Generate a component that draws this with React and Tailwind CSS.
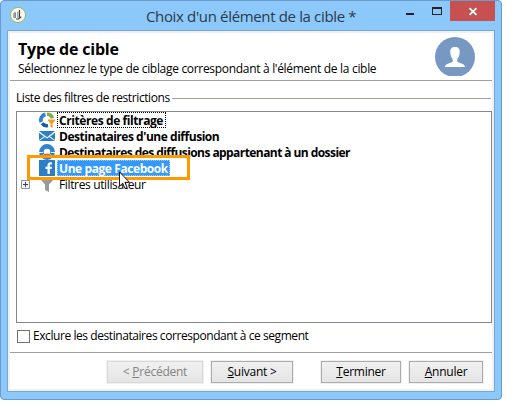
import React from "react";

function AppIcon() {
  return (
    <svg width="18" height="18" viewBox="0 0 18 18">
      <circle cx="9" cy="9" r="7.6" fill="#f8f8f4" stroke="#9cba55" strokeWidth="1" />
      <path d="M4 7.5l2-2 1 1-1 6-2-1zM8 6l1.500-1v7H8z" fill="#aaa" />
      <path d="M10.500 4v7.500M7 13l2.800-.2 2.500-2.200" fill="none" stroke="#444" strokeWidth="1.200" />
      <path d="M6.300 7v5" stroke="#777" strokeWidth="1" />
    </svg>
  );
}

function Avatar() {
  return (
    <svg width="40" height="39" viewBox="0 0 40 39">
      <circle cx="20" cy="20" r="20" fill="#7898c4" />
      <path d="M20 10c-3.400 0-5 2-4.700 5.500.2 3 1 4.800 2.400 6.500v2.400c-.7 1.500-7.700 1.700-7.700 5.600h20c0-3.900-7-4.100-7.700-5.600V22c1.400-1.700 2.200-3.500 2.400-6.500C25 12 23.400 10 20 10z" fill="#fff" />
    </svg>
  );
}

function TargetFilterIcon() {
  return (
    <svg width="16" height="16" viewBox="0 0 16 16">
      <path d="M6.500 2.300A5.800 5.800 0 0 0 2.300 10" fill="none" stroke="#2f83cf" strokeWidth="3.800" />
      <path d="M3.200 11.200A5.800 5.800 0 0 0 9 13.600" fill="none" stroke="#195b9b" strokeWidth="3.400" />
      <path d="M8 2.200A5.800 5.800 0 0 1 13.500 6.300" fill="none" stroke="#7dad41" strokeWidth="3.600" />
      <path d="M9 7.500h7v1.200l-2.500 2.800V16l-2-1v-3.500L9 8.700z" fill="#f39a2b" />
    </svg>
  );
}

function MailIcon() {
  return (
    <svg width="16" height="16" viewBox="0 0 16 16">
      <path d="M0 3h16L8 9.200zM0 4.800L5 8.400 0 12zM16 4.800L11 8.400 16 12zM0 13l6-4 2 1.600L10 9l6 4z" fill="#2a7fca" />
    </svg>
  );
}

function FolderTargetIcon() {
  return (
    <svg width="16" height="16" viewBox="0 0 16 16">
      <circle cx="8" cy="8" r="5.600" fill="none" stroke="#2f83cf" strokeWidth="4.600" />
      <path d="M0 8.500h4M12 8.500h4M2.500 13l3-3M13.500 13l-3-3" stroke="#fff" strokeWidth="1" />
      <path d="M5 10.500h6" stroke="#e05545" strokeWidth="1.500" />
    </svg>
  );
}

function FacebookIcon() {
  return (
    <svg width="16" height="16" viewBox="0 0 16 16">
      <path d="M0 0h16v16H0z" fill="#2a7fc9" />
      <path d="M8.500 14V9H6.500V6.700h2V5.400C8.500 3.300 9.700 2.300 11.500 2.300H13v2.300h-1c-.9 0-1.200.4-1.200 1.100v1H13L12.700 9h-1.900v5z" fill="#fff" />
    </svg>
  );
}

function FunnelIcon() {
  return (
    <svg width="16" height="16" viewBox="0 0 16 16">
      <path d="M2 2h12v2L10 8.500V16l-4-2V8.500L2 4z" fill="#9a9a9a" />
    </svg>
  );
}

function Row({ icon, children }) {
  return (
    <div className="flex h-4 items-center">
      <div className="h-4 w-4 shrink-0">{icon}</div>
      <div className="ml-[2px] flex h-4 items-center">{children}</div>
    </div>
  );
}

function DialogButton({ className, children }) {
  return (
    <div className={`flex h-[22px] items-center justify-center border bg-linear-to-b from-[#f0f0f0] to-[#e5e5e5] shadow-[0_0_0_1px_#f0f0f0] ${className}`}>
      <span className="whitespace-nowrap tracking-[-0.25px]">{children}</span>
    </div>
  );
}

export default function App() {
  return (
    <div className="relative h-[414px] w-[517px] overflow-hidden bg-white font-['Open_Sans','Noto_Sans',sans-serif] text-[12px] leading-4 whitespace-nowrap text-black">
      <div className="flex h-[400px] w-[502px] flex-col rounded-[4px] border border-[#6a9bcb] bg-[#8cc8fa] px-[6px] pb-[7px]">
        <div className="flex h-[29px] shrink-0">
          <div className="ml-[2px] mt-[5px] w-[18px]"><AppIcon /></div>
          <div className="ml-[119px] mt-[5px] w-[212px] text-[15px] leading-5 tracking-[-0.35px] text-[#2b3b49]">Choix d'un élément de la cible *</div>
          <svg className="ml-[47px]" width="37" height="20" viewBox="0 0 37 20">
            <path d="M1 12h8v2H1z" fill="#222" />
            <path d="M27 6h10v8H27zM28 8v5h8V8z" fill="#222" fillRule="evenodd" />
          </svg>
          <div className="ml-[8px] h-5 w-[45px] bg-[#c75050]">
            <svg width="45" height="20" viewBox="0 0 45 20"><path d="M19.500 7.200l7 6.600M26.500 7.200l-7 6.600" stroke="#fff" strokeWidth="1.800" /></svg>
          </div>
        </div>

        <div className="flex min-h-0 w-[488px] flex-1 flex-col border border-[#74a6d6] bg-white shadow-[inset_0_0_0_2px_#f0f0f0]">
          <div className="mx-[2px] flex h-[50px] shrink-0 border-b border-[#a0a0a0]">
            <div className="w-[425px] pl-2 pt-[8px]">
              <div className="text-[16px] leading-[20px] font-bold tracking-[-0.2px]">Type de cible</div>
              <div className="mt-[2px] tracking-[-0.31px]">Sélectionnez le type de ciblage correspondant à l'élément de la cible</div>
            </div>
            <div className="mt-[6px]"><Avatar /></div>
          </div>

          <div className="ml-2 mt-[9px] flex h-4 shrink-0 items-center">
            <span className="w-[156px] tracking-[-0.4px]">Liste des filtres de restrictions</span>
            <div className="h-px w-[319px] bg-[#a0a0a0]" />
          </div>

          <div className="ml-2 mt-[5px] h-[212px] w-[476px] shrink-0 border border-[#828790] pl-[22px]">
            <Row icon={<TargetFilterIcon />}>
              <span className="h-4 w-[109px] border border-dotted border-black pl-px leading-[15px] font-bold tracking-[-0.41px]">Critères de filtrage</span>
            </Row>
            <Row icon={<MailIcon />}><span className="pl-[2px] pt-px font-bold tracking-[-0.47px]">Destinataires d'une diffusion</span></Row>
            <Row icon={<FolderTargetIcon />}><span className="pl-[2px] pt-px font-bold tracking-[-0.57px]">Destinataires des diffusions appartenant à un dossier</span></Row>
            <Row icon={<FacebookIcon />}>
              <span className="h-4 w-[113px] border border-dotted border-[#9ccfff] bg-[#3399ff] pl-px leading-[15px] font-bold tracking-[-0.42px] text-white">Une page Facebook</span>
            </Row>
            <div className="-ml-[18px] flex items-center">
              <svg width="18" height="9" viewBox="0 0 18 9" className="shrink-0">
                <path d="M.5.5h8v8h-8z" fill="#f4f4f4" stroke="#919191" />
                <path d="M2 4.500h5M4.500 2v5" stroke="#2c3c80" />
              </svg>
              <Row icon={<FunnelIcon />}><span className="pl-[2px] pt-px tracking-[-0.36px]">Filtres utilisateur</span></Row>
            </div>
          </div>

          <div className="ml-[9px] mt-[5px] flex h-4 shrink-0 items-center">
            <div className="h-[13px] w-[13px] border border-[#707070] bg-white" />
            <span className="ml-[3px] tracking-[-0.43px]">Exclure les destinataires correspondant à ce segment</span>
          </div>

          <div className="mx-[2px] mt-[8px] h-px shrink-0 bg-[#a0a0a0]" />
          <div className="ml-[99px] mt-[8px] flex">
            <DialogButton className="w-[96px] border-[#d9d9d9] text-[#838383]">&lt; <u>P</u>récédent</DialogButton>
            <DialogButton className="ml-[8px] w-[82px] border-[#acacac]"><u>S</u>uivant &gt;</DialogButton>
            <DialogButton className="ml-[28px] w-[80px] border-[#acacac]"><u>T</u>erminer</DialogButton>
            <DialogButton className="ml-[8px] w-[74px] border-[#acacac]"><u>A</u>nnuler</DialogButton>
          </div>
        </div>
      </div>

      {/* Highlight frame and mouse pointer over the selected row */}
      <div className="absolute left-[27px] top-[155px] h-[25px] w-[163px] border-3 border-[#ff9900]" />
      <svg className="absolute left-[119px] top-[171px]" width="12" height="19" viewBox="0 0 13 20">
        <path d="M.5.700v15.500l3.500-3.300 2.500 5.800 2.400-1-2.500-5.700h5z" fill="#fff" stroke="#000" />
      </svg>
    </div>
  );
}
